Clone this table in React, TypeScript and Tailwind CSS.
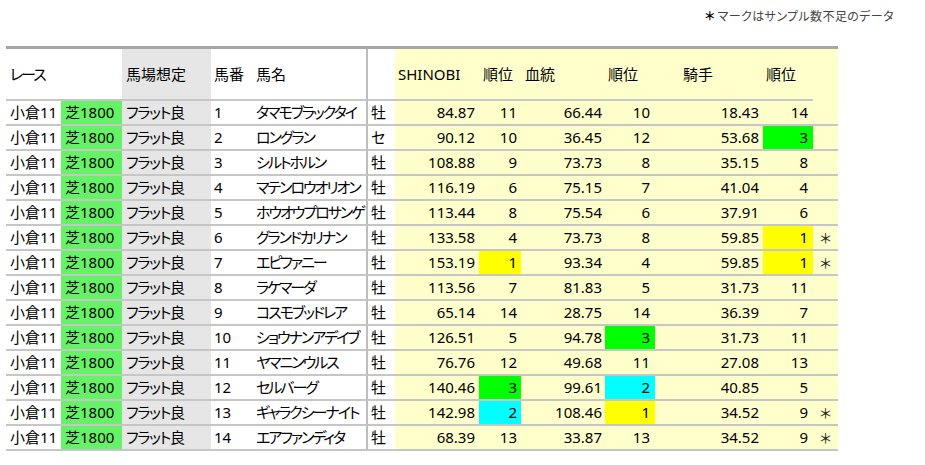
type Mark = 'g' | 'c' | 'y' | undefined

type Row = {
  no: number
  name: string
  sex: string
  shinobi: string
  sRank: number
  sMark?: Mark
  blood: string
  bRank: number
  bMark?: Mark
  jockey: string
  jRank: number
  jMark?: Mark
  few?: boolean
}

const rows: Row[] = [
  { no: 1, name: 'タマモブラックタイ', sex: '牡', shinobi: '84.87', sRank: 11, blood: '66.44', bRank: 10, jockey: '18.43', jRank: 14 },
  { no: 2, name: 'ロングラン', sex: 'セ', shinobi: '90.12', sRank: 10, blood: '36.45', bRank: 12, jockey: '53.68', jRank: 3, jMark: 'g' },
  { no: 3, name: 'シルトホルン', sex: '牡', shinobi: '108.88', sRank: 9, blood: '73.73', bRank: 8, jockey: '35.15', jRank: 8 },
  { no: 4, name: 'マテンロウオリオン', sex: '牡', shinobi: '116.19', sRank: 6, blood: '75.15', bRank: 7, jockey: '41.04', jRank: 4 },
  { no: 5, name: 'ホウオウプロサンゲ', sex: '牡', shinobi: '113.44', sRank: 8, blood: '75.54', bRank: 6, jockey: '37.91', jRank: 6 },
  { no: 6, name: 'グランドカリナン', sex: '牡', shinobi: '133.58', sRank: 4, blood: '73.73', bRank: 8, jockey: '59.85', jRank: 1, jMark: 'y', few: true },
  { no: 7, name: 'エピファニー', sex: '牡', shinobi: '153.19', sRank: 1, sMark: 'y', blood: '93.34', bRank: 4, jockey: '59.85', jRank: 1, jMark: 'y', few: true },
  { no: 8, name: 'ラケマーダ', sex: '牡', shinobi: '113.56', sRank: 7, blood: '81.83', bRank: 5, jockey: '31.73', jRank: 11 },
  { no: 9, name: 'コスモブッドレア', sex: '牡', shinobi: '65.14', sRank: 14, blood: '28.75', bRank: 14, jockey: '36.39', jRank: 7 },
  { no: 10, name: 'ショウナンアデイブ', sex: '牡', shinobi: '126.51', sRank: 5, blood: '94.78', bRank: 3, bMark: 'g', jockey: '31.73', jRank: 11 },
  { no: 11, name: 'ヤマニンウルス', sex: '牡', shinobi: '76.76', sRank: 12, blood: '49.68', bRank: 11, jockey: '27.08', jRank: 13 },
  { no: 12, name: 'セルバーグ', sex: '牡', shinobi: '140.46', sRank: 3, sMark: 'g', blood: '99.61', bRank: 2, bMark: 'c', jockey: '40.85', jRank: 5 },
  { no: 13, name: 'ギャラクシーナイト', sex: '牡', shinobi: '142.98', sRank: 2, sMark: 'c', blood: '108.46', bRank: 1, bMark: 'y', jockey: '34.52', jRank: 9, few: true },
  { no: 14, name: 'エアファンディタ', sex: '牡', shinobi: '68.39', sRank: 13, blood: '33.87', bRank: 13, jockey: '34.52', jRank: 9, few: true },
]

const markBg = (m: Mark) =>
  m === 'g' ? 'bg-[#00ff00]' : m === 'c' ? 'bg-[#00ffff]' : m === 'y' ? 'bg-[#ffff00]' : 'bg-[#ffffcc]'

const cell = 'flex h-[25px] items-center border-b-2 border-[#c6c6c6] whitespace-nowrap'
const head = 'flex h-[52px] items-center border-b-2 border-[#c6c6c6] whitespace-nowrap'

export default function App() {
  return (
    <div className="h-[465px] w-[925px] overflow-hidden bg-white font-['Noto_Sans','Noto_Sans_CJK_JP',sans-serif] text-[15px] text-black [font-feature-settings:'palt']">
      <div className="flex h-[46px] justify-end pr-[31px] pt-[8px] text-[12px] text-[#444]">
        <span className="mr-[3px] font-bold text-black">＊</span>
        <span className="tracking-[0.4px]">マークはサンプル数不足のデータ</span>
      </div>

      <div className="ml-[6px] w-[832px] border-t-[3px] border-[#a6a6a6]">
        <div className="grid grid-cols-[55px_61px_89px_41px_114px_29px_84px_42px_84px_50px_108px_50px_25px]">
          <div className={`${head} pl-[4px] tracking-[-2px]`}>レース</div>
          <div className={head} />
          <div className={`${head} bg-[#e6e6e6] pl-[4px]`}>馬場想定</div>
          <div className={`${head} pl-[3px]`}>馬番</div>
          <div className={`${head} pl-[4px]`}>馬名</div>
          <div className={`${head} border-l-2 border-l-[#bdbdbd]`} />
          <div className={`${head} bg-[#ffffcc] pl-[3px]`}>SHINOBI</div>
          <div className={`${head} bg-[#ffffcc] pl-[4px]`}>順位</div>
          <div className={`${head} bg-[#ffffcc] pl-[4px]`}>血統</div>
          <div className={`${head} bg-[#ffffcc] pl-[3px]`}>順位</div>
          <div className={`${head} bg-[#ffffcc] pl-[28px]`}>騎手</div>
          <div className={`${head} bg-[#ffffcc] pl-[3px]`}>順位</div>
          <div className={`${head} border-b-transparent bg-[#ffffcc]`} />

          {rows.map((r) => (
            <div className="contents" key={r.no}>
              <div className={`${cell} pl-[4px]`}>小倉11</div>
              <div className={`${cell} bg-[#66f266] pl-[4px]`}>芝1800</div>
              <div className={`${cell} bg-[#e6e6e6] pl-[4px] tracking-[-1.2px]`}>フラット良</div>
              <div className={`${cell} pl-[3px]`}>{r.no}</div>
              <div className={`${cell} pl-[4px] tracking-[-2px]`}>{r.name}</div>
              <div className={`${cell} border-l-2 border-l-[#bdbdbd] pl-[3px]`}>{r.sex}</div>
              <div className={`${cell} justify-end bg-[#ffffcc] pr-[4px]`}>{r.shinobi}</div>
              <div className={`${cell} justify-end pr-[4px] ${markBg(r.sMark)}`}>{r.sRank}</div>
              <div className={`${cell} justify-end bg-[#ffffcc] pr-[3px]`}>{r.blood}</div>
              <div className={`${cell} justify-end pr-[5px] ${markBg(r.bMark)}`}>{r.bRank}</div>
              <div className={`${cell} justify-end bg-[#ffffcc] pr-[4px]`}>{r.jockey}</div>
              <div className={`${cell} justify-end pr-[5px] ${markBg(r.jMark)}`}>{r.jRank}</div>
              <div className={`${cell} justify-center bg-[#ffffcc] text-[14px] text-[#222]`}>
                {r.few ? '＊' : ''}
              </div>
            </div>
          ))}
        </div>
      </div>
    </div>
  )
}
